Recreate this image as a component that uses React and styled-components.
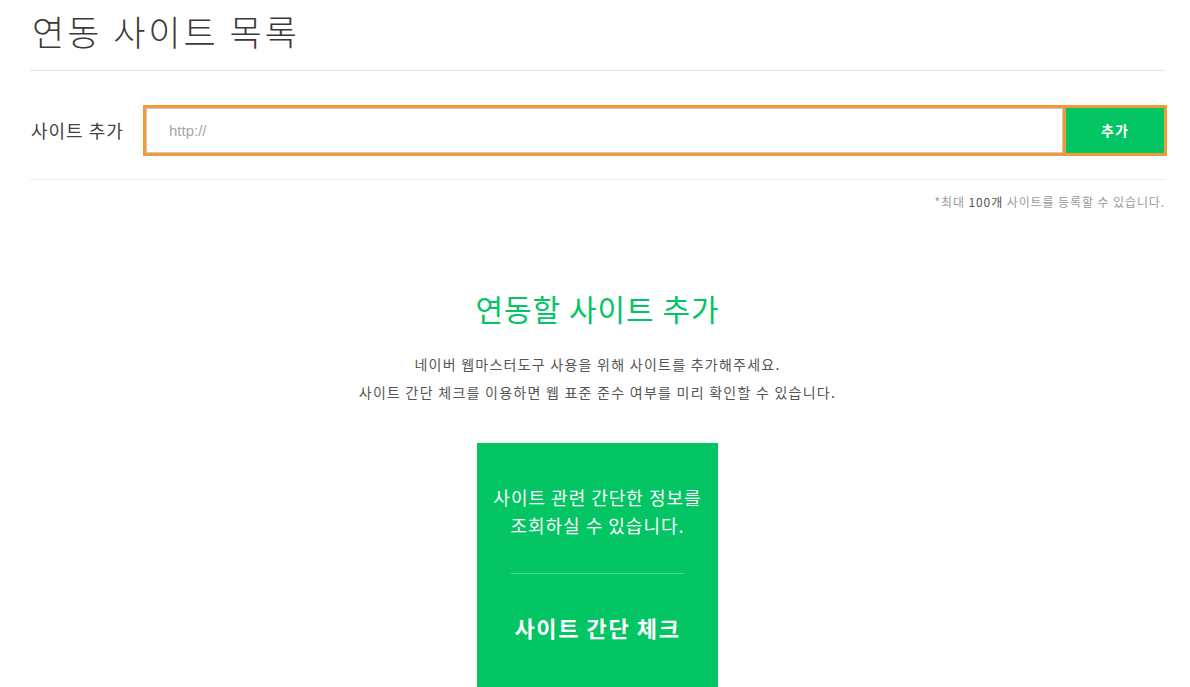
import React from "react";
import styled, { createGlobalStyle } from "styled-components";

const GlobalStyle = createGlobalStyle`
  html, body {
    margin: 0;
    padding: 0;
    background: #fff;
  }
  body {
    font-family: "Noto Sans CJK KR", "Liberation Sans", sans-serif;
    color: #333;
  }
`;

const Page = styled.div`
  padding: 0 25px 0 30px;
`;

const Title = styled.h2`
  margin: 0;
  padding: 6px 0 14px 2px;
  height: 50px;
  line-height: 50px;
  font-size: 35px;
  font-weight: 300;
  letter-spacing: 3px;
  color: #3a3a3a;
  border-bottom: 1px solid #e5e5e5;
`;

const AddRow = styled.div`
  display: flex;
  align-items: center;
  box-sizing: border-box;
  height: 109px;
  padding-top: 10px;
  border-bottom: 1px solid #ededed;
`;

const Label = styled.label`
  width: 112px;
  flex: none;
  font-size: 18px;
  letter-spacing: 1px;
  color: #444;
  padding-left: 1px;
  line-height: 24px;
`;

const Form = styled.div`
  flex: 1;
  display: flex;
  height: 45px;
  border: 3px solid #f19a38;
  margin-right: -2px;
`;

const UrlInput = styled.input`
  flex: 1;
  min-width: 0;
  border: 1px solid #c8c8c8;
  padding: 0 0 0 22px;
  font-family: "Liberation Sans", sans-serif;
  font-size: 15px;
  color: #333;
  outline: none;
  &::placeholder {
    color: #a6a6a6;
  }
`;

const AddButton = styled.button`
  width: 101px;
  flex: none;
  border: none;
  border-left: 3px solid #f19a38;
  background: #03c563;
  color: #fff;
  font-family: inherit;
  font-size: 14px;
  font-weight: 700;
  letter-spacing: 1px;
  cursor: pointer;
`;

const Note = styled.p`
  margin: 14px 0 0;
  text-align: right;
  font-size: 12px;
  line-height: 16px;
  letter-spacing: 0.9px;
  color: #999;
  b {
    font-weight: 400;
    color: #555;
  }
`;

const Intro = styled.section`
  display: flex;
  flex-direction: column;
  align-items: center;
  margin-top: 76px;
`;

const IntroTitle = styled.h3`
  margin: 0;
  font-size: 30px;
  font-weight: 400;
  line-height: 44px;
  letter-spacing: 1px;
  color: #03c563;
`;

const IntroText = styled.p`
  margin: 20px 0 0;
  text-align: center;
  font-size: 14px;
  line-height: 28px;
  letter-spacing: 1.25px;
  color: #555;
`;

const Card = styled.div`
  margin-top: 37px;
  width: 241px;
  height: 245px;
  background: #03c563;
  color: #fff;
  display: flex;
  flex-direction: column;
  align-items: center;
  padding-top: 40px;
  box-sizing: border-box;
`;

const CardText = styled.p`
  margin: 0;
  text-align: center;
  font-size: 18px;
  letter-spacing: 1px;
  line-height: 28px;
`;

const CardRule = styled.hr`
  width: 173px;
  margin: 34px 0 0;
  border: none;
  border-top: 1px solid rgba(255, 255, 255, 0.3);
`;

const CardAction = styled.a`
  margin-top: 37px;
  font-size: 22px;
  font-weight: 700;
  line-height: 32px;
  letter-spacing: 1.6px;
  color: #fff;
  text-decoration: none;
`;

export default function App() {
  return (
    <Page>
      <GlobalStyle />
      <Title>연동 사이트 목록</Title>
      <AddRow>
        <Label htmlFor="site-url">사이트 추가</Label>
        <Form>
          <UrlInput id="site-url" placeholder="http://" />
          <AddButton>추가</AddButton>
        </Form>
      </AddRow>
      <Note>
        *최대 <b>100개</b> 사이트를 등록할 수 있습니다.
      </Note>
      <Intro>
        <IntroTitle>연동할 사이트 추가</IntroTitle>
        <IntroText>
          네이버 웹마스터도구 사용을 위해 사이트를 추가해주세요.
          <br />
          사이트 간단 체크를 이용하면 웹 표준 준수 여부를 미리 확인할 수 있습니다.
        </IntroText>
        <Card>
          <CardText>
            사이트 관련 간단한 정보를
            <br />
            조회하실 수 있습니다.
          </CardText>
          <CardRule />
          <CardAction href="#">사이트 간단 체크</CardAction>
        </Card>
      </Intro>
    </Page>
  );
}
